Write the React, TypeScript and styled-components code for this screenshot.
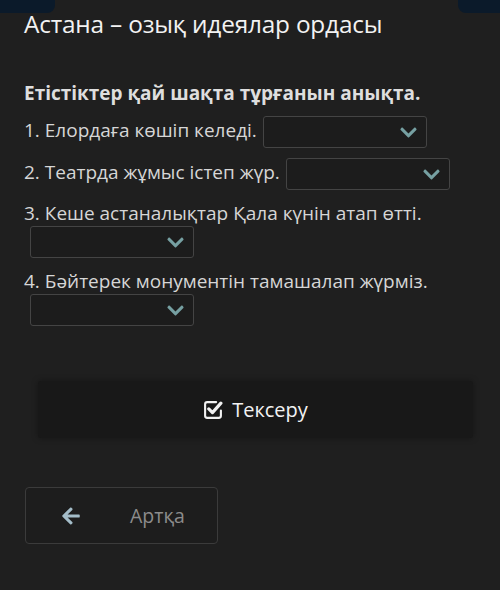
import React from "react";
import styled, { createGlobalStyle } from "styled-components";
import { FaChevronDown, FaArrowLeft } from "react-icons/fa";

const GlobalStyle = createGlobalStyle`
  html, body {
    margin: 0;
    padding: 0;
    background: #1f1f1f;
  }
  body {
    font-family: "Open Sans", "Noto Sans", sans-serif;
    color: #e4e4e4;
  }
`;

const Page = styled.div`
  position: relative;
  width: 500px;
  height: 590px;
  overflow: hidden;
  background: #1f1f1f;
`;

const Corner = styled.div<{ $side: "left" | "right" }>`
  position: absolute;
  top: 0;
  ${(p) => (p.$side === "left" ? "left: 0; width: 55px;" : "right: 0; width: 42px;")}
  height: 13px;
  background: #0b1a2a;
  border-radius: ${(p) => (p.$side === "left" ? "0 0 8px 0" : "0 0 0 8px")};
`;

const Content = styled.div`
  padding: 8px 24px 0 24px;
`;

const Title = styled.h1`
  margin: 0;
  font-size: 24.4px;
  font-weight: 400;
  line-height: 32px;
  color: #f2f2f2;
  letter-spacing: -0.2px;
`;

const Task = styled.h2`
  margin: 40px 0 10px;
  font-size: 19px;
  font-weight: 700;
  line-height: 26px;
  color: #dedede;
`;

const Item = styled.div`
  font-size: 19px;
  line-height: 26px;
  color: #d6d6d6;
  margin-bottom: 10px;
`;

const Select = styled.span`
  display: inline-flex;
  align-items: center;
  justify-content: flex-end;
  box-sizing: border-box;
  width: 164px;
  height: 32px;
  margin-left: 6px;
  padding-right: 8px;
  vertical-align: middle;
  border: 1px solid #444444;
  border-radius: 3px;
  background: #1c1c1c;
  color: #76a0a2;
  font-size: 19px;
`;

const CheckWrap = styled.div`
  padding: 45px 27px 0 38px;
`;

const CheckButton = styled.button`
  display: flex;
  align-items: center;
  justify-content: center;
  gap: 9px;
  width: 100%;
  height: 57px;
  border: none;
  border-radius: 3px;
  background: #181818;
  box-shadow: 0 0 6px rgba(0, 0, 0, 0.35);
  color: #f2f2f2;
  font-family: "Open Sans", "Noto Sans", sans-serif;
  font-size: 20px;
`;

const BackWrap = styled.div`
  padding: 49px 0 0 25px;
`;

const BackButton = styled.button`
  display: flex;
  align-items: center;
  box-sizing: border-box;
  width: 193px;
  height: 57px;
  padding: 0 0 0 35px;
  border: 1px solid #3b3b3b;
  border-radius: 4px;
  background: #1d1d1d;
  color: #8c8c8c;
  font-family: "Open Sans", "Noto Sans", sans-serif;
  font-size: 19.5px;
  svg {
    color: #a4bdc9;
    font-size: 20px;
  }
  span {
    margin-left: 49px;
  }
`;

const CheckIcon = () => (
  <svg width="20" height="20" viewBox="0 0 19 19" fill="none">
    <path
      d="M12.5 2H4a2 2 0 0 0-2 2v11a2 2 0 0 0 2 2h11a2 2 0 0 0 2-2v-5"
      stroke="#f2f2f2"
      strokeWidth="2"
      strokeLinecap="round"
    />
    <path
      d="M5.5 8.5l3.5 3.5 8-9"
      stroke="#f2f2f2"
      strokeWidth="3"
      strokeLinecap="round"
      strokeLinejoin="round"
    />
  </svg>
);

const items = [
  "1. Елордаға көшіп келеді.",
  "2. Театрда жұмыс істеп жүр.",
  "3. Кеше астаналықтар Қала күнін атап өтті.",
  "4. Бәйтерек монументін тамашалап жүрміз.",
];

export default function App() {
  return (
    <Page>
      <GlobalStyle />
      <Corner $side="left" />
      <Corner $side="right" />
      <Content>
        <Title>Астана – озық идеялар ордасы</Title>
        <Task>Етістіктер қай шақта тұрғанын анықта.</Task>
        {items.map((t) => (
          <Item key={t}>
            {t}
            <Select>
              <FaChevronDown />
            </Select>
          </Item>
        ))}
      </Content>
      <CheckWrap>
        <CheckButton>
          <CheckIcon />
          Тексеру
        </CheckButton>
      </CheckWrap>
      <BackWrap>
        <BackButton>
          <FaArrowLeft />
          <span>Артқа</span>
        </BackButton>
      </BackWrap>
    </Page>
  );
}
